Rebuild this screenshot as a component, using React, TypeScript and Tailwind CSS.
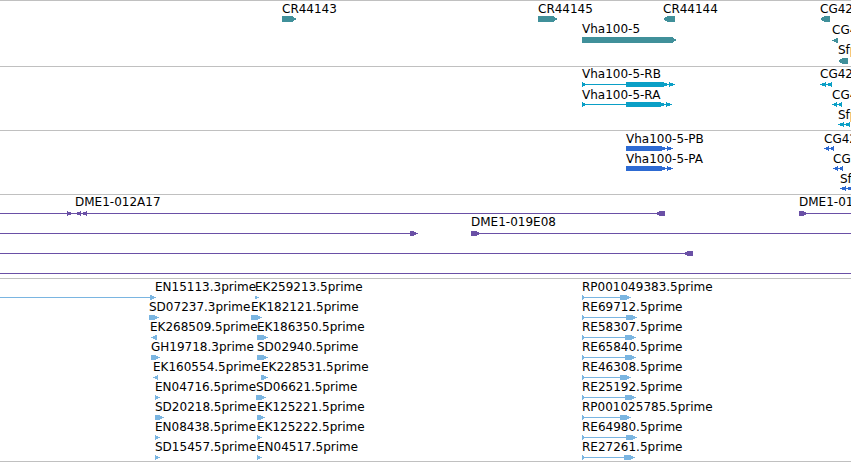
import React from 'react';

type Dir = 'r' | 'l';

// glyph shapes, page coordinates
function gene(x0: number, x1: number, top: number, dir: Dir, h = 6) {
  const b = top + h;
  const c = top + h / 2;
  const pts =
    dir === 'r'
      ? `${x0},${top} ${x1 - 5},${top} ${x1},${c} ${x1 - 5},${b} ${x0},${b}`
      : `${x0},${c} ${x0 + 5},${top} ${x1},${top} ${x1},${b} ${x0 + 5},${b}`;
  return <polygon points={pts} />;
}

function tri(x0: number, x1: number, top: number, dir: Dir, h = 6) {
  const b = top + h;
  const c = top + h / 2;
  const pts = dir === 'r' ? `${x0},${top} ${x1},${c} ${x0},${b}` : `${x1},${top} ${x0},${c} ${x1},${b}`;
  return <polygon points={pts} />;
}

function dbl(x0: number, top: number, dir: Dir, w = 6, h = 6) {
  return (
    <>
      {tri(x0, x0 + w, top, dir, h)}
      {tri(x0 + w, x0 + 2 * w, top, dir, h)}
    </>
  );
}

function Label({ x, y, text }: { x: number; y: number; text: string }) {
  return (
    <span className="absolute whitespace-nowrap text-[12px] leading-[12px] text-black" style={{ left: x, top: y }}>
      {text}
    </span>
  );
}

function Track({
  y0,
  h,
  color,
  labels,
  children,
}: {
  y0: number;
  h: number;
  color: string;
  labels: [number, number, string][];
  children: React.ReactNode;
}) {
  // y0 = page y of the separator line; content starts one pixel below
  return (
    <div className="relative shrink-0 border-t border-[#c0c0c0] overflow-hidden" style={{ height: h + 1 }}>
      <svg
        className="absolute left-0 top-0"
        width={851}
        height={h}
        viewBox={`0 ${y0 + 1} 851 ${h}`}
        fill={color}
        shapeRendering="crispEdges"
      >
        {children}
      </svg>
      {labels.map(([x, y, t]) => (
        <Label key={t + x + y} x={x} y={y - y0 - 1} text={t} />
      ))}
    </div>
  );
}

const estLeft: [number, string, number, string][] = [
  [155, 'EN15113.3prime', 255, 'EK259213.5prime'],
  [149, 'SD07237.3prime', 251, 'EK182121.5prime'],
  [150, 'EK268509.5prime', 257, 'EK186350.5prime'],
  [151, 'GH19718.3prime', 257, 'SD02940.5prime'],
  [153, 'EK160554.5prime', 261, 'EK228531.5prime'],
  [155, 'EN04716.5prime', 256, 'SD06621.5prime'],
  [155, 'SD20218.5prime', 257, 'EK125221.5prime'],
  [155, 'EN08438.5prime', 257, 'EK125222.5prime'],
  [155, 'SD15457.5prime', 257, 'EN04517.5prime'],
];

// left glyph: x0, x1, dir ; right glyph: x0, x1
const estGlyphs: [number, number, Dir, number, number][] = [
  [150, 156, 'r', 255, 259],
  [149, 159, 'r', 251, 262],
  [151, 157, 'l', 257, 268],
  [151, 160, 'r', 257, 268],
  [153, 158, 'l', 261, 268],
  [155, 160, 'r', 256, 266],
  [155, 164, 'r', 257, 265],
  [155, 160, 'r', 257, 262],
  [155, 160, 'r', 257, 262],
];

const reads: [string, number][] = [
  ['RP001049383.5prime', 631],
  ['RE69712.5prime', 637],
  ['RE58307.5prime', 636],
  ['RE65840.5prime', 636],
  ['RE46308.5prime', 631],
  ['RE25192.5prime', 636],
  ['RP001025785.5prime', 631],
  ['RE64980.5prime', 637],
  ['RE27261.5prime', 635],
];

export default function App() {
  return (
    <div
      className="flex h-[462px] w-[851px] flex-col overflow-hidden bg-white"
      style={{ fontFamily: '"DejaVu Sans", Verdana, sans-serif' }}
    >
      {/* genes */}
      <Track
        y0={0}
        h={65}
        color="#40909a"
        labels={[
          [282, 3, 'CR44143'],
          [538, 3, 'CR44145'],
          [663, 3, 'CR44144'],
          [820, 3, 'CG42'],
          [582, 23, 'Vha100-5'],
          [832, 24, 'CG4'],
          [838, 44, 'Sfp'],
        ]}
      >
        {gene(282, 297, 16, 'r')}
        {gene(538, 558, 16, 'r')}
        {gene(663, 675, 16, 'l')}
        {gene(820, 830, 16, 'l')}
        {gene(582, 677, 37, 'r')}
        {gene(832, 838, 38, 'l', 5)}
        {gene(838, 848, 58, 'l')}
      </Track>

      {/* transcripts */}
      <Track
        y0={66}
        h={63}
        color="#0a9fc6"
        labels={[
          [582, 68, 'Vha100-5-RB'],
          [582, 89, 'Vha100-5-RA'],
          [820, 68, 'CG42'],
          [832, 89, 'CG4'],
          [838, 109, 'Sfp'],
        ]}
      >
        <rect x={582} y={84} width={84} height={1} />
        {tri(582, 587, 82, 'r', 5)}
        <rect x={626} y={82} width={37} height={5} />
        {dbl(663, 82, 'r', 6, 5)}
        <rect x={582} y={104} width={80} height={1} />
        {tri(582, 587, 102, 'r', 5)}
        <rect x={626} y={102} width={34} height={5} />
        {dbl(660, 102, 'r', 6, 5)}
        {dbl(820, 82, 'l', 6, 5)}
        {dbl(832, 102, 'l', 5, 5)}
        {dbl(838, 122, 'l', 6, 5)}
      </Track>

      {/* proteins */}
      <Track
        y0={130}
        h={63}
        color="#2d6ad2"
        labels={[
          [626, 133, 'Vha100-5-PB'],
          [626, 153, 'Vha100-5-PA'],
          [824, 133, 'CG42'],
          [833, 153, 'CG'],
          [840, 173, 'Sf'],
        ]}
      >
        <rect x={626} y={146} width={35} height={5} />
        {dbl(661, 146, 'r', 6, 5)}
        <rect x={626} y={166} width={35} height={5} />
        {dbl(661, 166, 'r', 6, 5)}
        {dbl(824, 146, 'l', 5, 5)}
        {dbl(833, 166, 'l', 5, 5)}
        {dbl(840, 186, 'l', 6, 5)}
      </Track>

      {/* BAC clones */}
      <Track
        y0={194}
        h={83}
        color="#6a50a6"
        labels={[
          [75, 196, 'DME1-012A17'],
          [471, 216, 'DME1-019E08'],
          [799, 196, 'DME1-01'],
        ]}
      >
        <rect x={0} y={213} width={658} height={1} />
        {tri(67, 73, 211, 'r', 5)}
        {dbl(75, 211, 'l', 6, 5)}
        {gene(655, 665, 211, 'l', 5)}
        {gene(799, 808, 211, 'r', 5)}
        <rect x={805} y={213} width={46} height={1} />
        <rect x={0} y={233} width={412} height={1} />
        {gene(410, 418, 231, 'r', 5)}
        {gene(471, 481, 231, 'r', 5)}
        <rect x={478} y={233} width={373} height={1} />
        <rect x={0} y={253} width={686} height={1} />
        {gene(683, 693, 251, 'l', 5)}
        <rect x={0} y={273} width={851} height={1} />
      </Track>

      {/* ESTs */}
      <Track
        y0={278}
        h={182}
        color="#7ab5e1"
        labels={[
          ...estLeft.flatMap(([x1, t1, x2, t2], i): [number, number, string][] => [
            [x1, 281 + i * 20, t1],
            [x2, 281 + i * 20, t2],
          ]),
          ...reads.map(([t], i): [number, number, string] => [582, 281 + i * 20, t]),
        ]}
      >
        <rect x={0} y={297} width={152} height={1} />
        {estGlyphs.map(([a0, a1, d, b0, b1], i) => (
          <g key={i}>
            {gene(a0, a1, 295 + i * 20, d, 5)}
            {gene(b0, b1, 295 + i * 20, 'r', 5)}
          </g>
        ))}
        {reads.map(([, end], i) => (
          <g key={'r' + i}>
            <rect x={582} y={297 + i * 20} width={end - 582} height={1} />
            {tri(582, 586, 295 + i * 20, 'r', 5)}
            {gene(end - 11, end, 295 + i * 20, 'r', 5)}
          </g>
        ))}
      </Track>
      <div className="h-px shrink-0 bg-[#c0c0c0]" />
    </div>
  );
}
